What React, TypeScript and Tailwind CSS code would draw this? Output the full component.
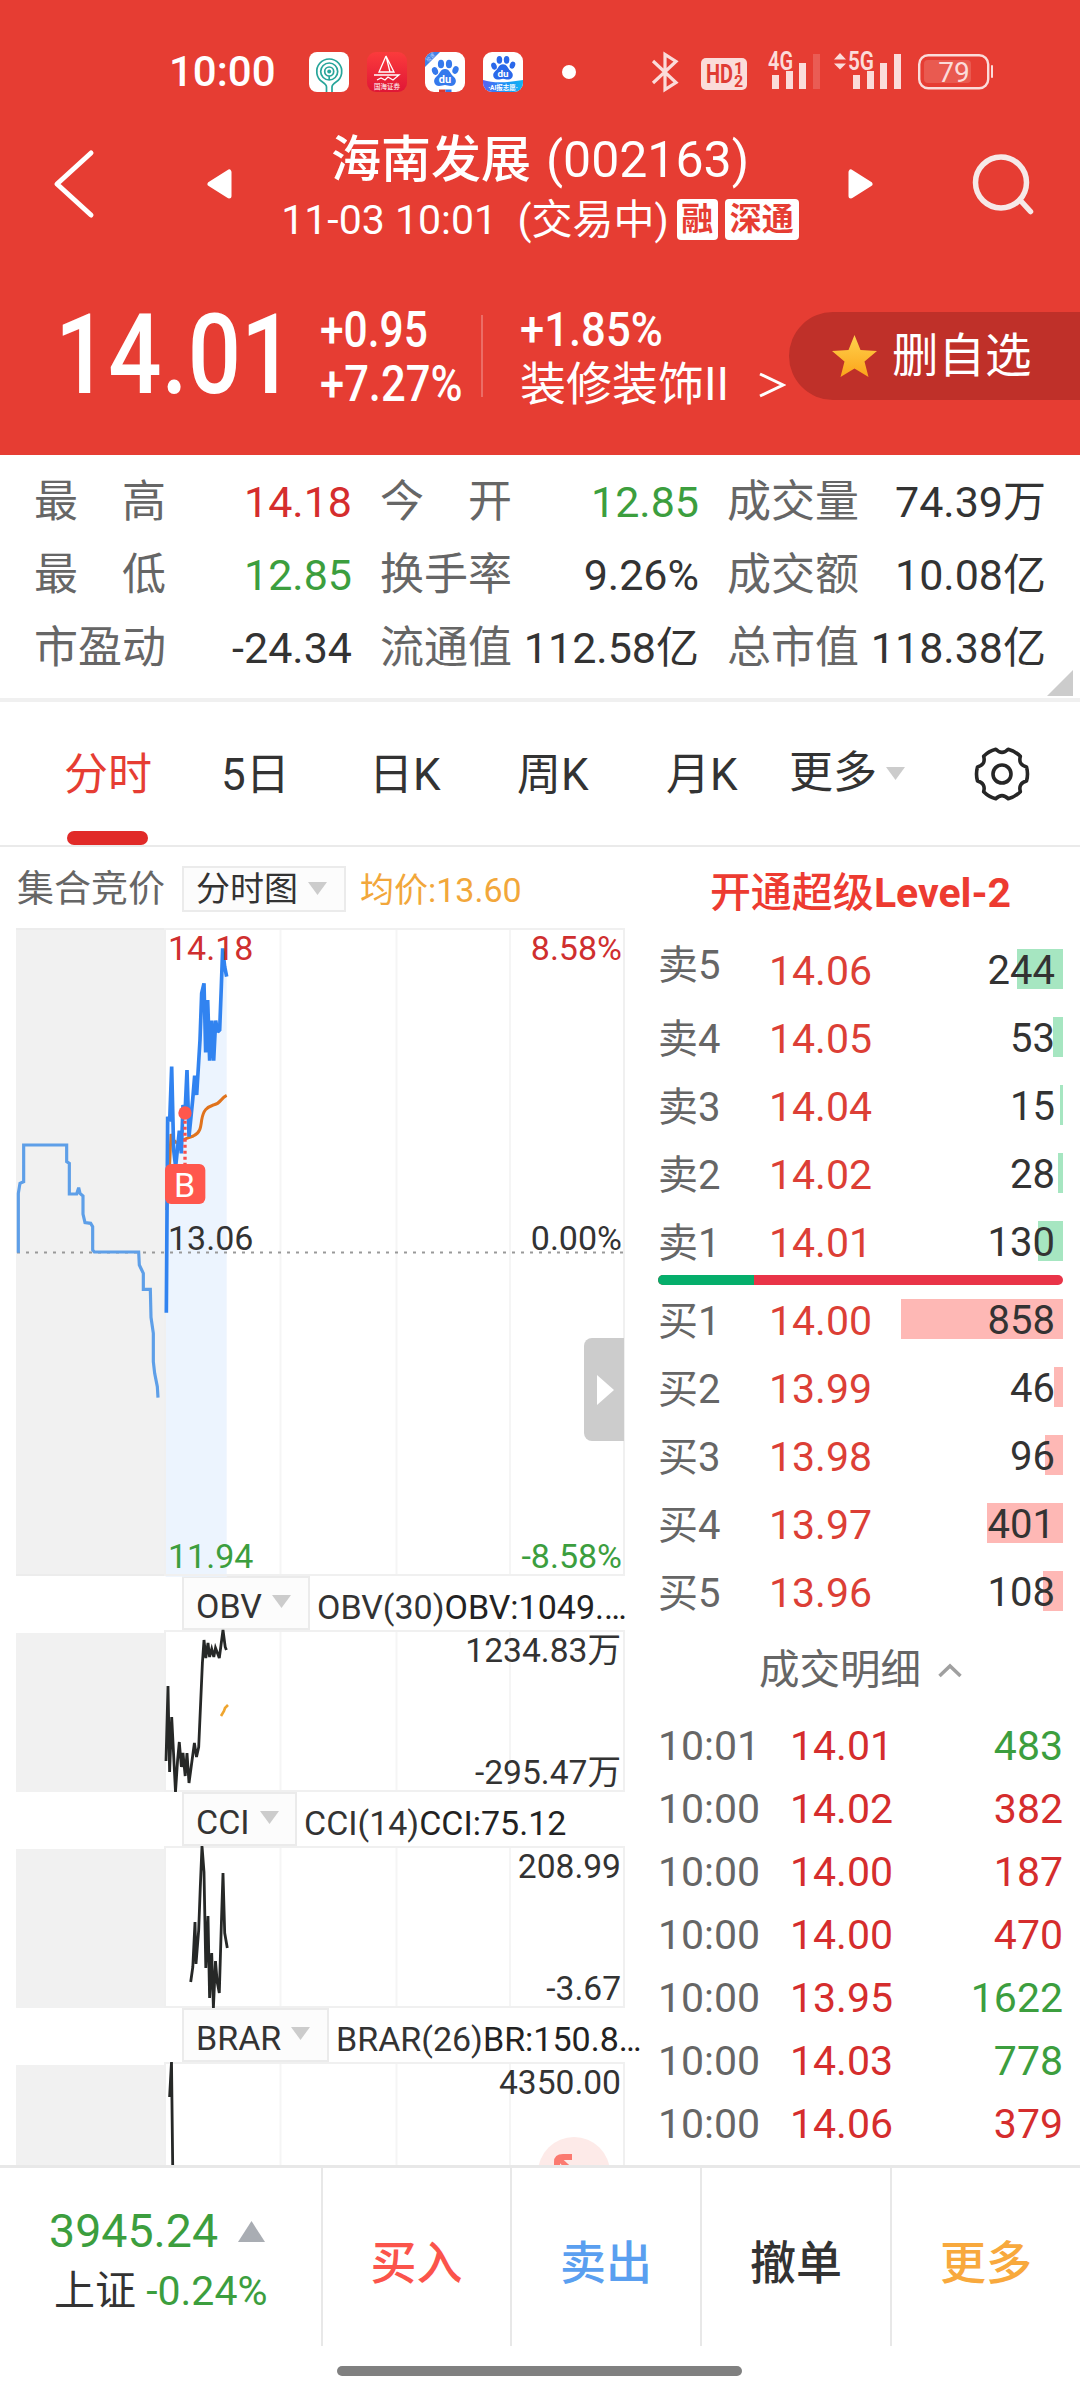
import type { ReactNode } from 'react';

type Tone = 'up' | 'down' | 'plain';

const TONE_CLASS: Record<Tone, string> = {
  up: 'text-[#d52d2d]',
  down: 'text-[#3c9e3e]',
  plain: 'text-[#333333]',
};

const STATS: { label: string; value: string; tone: Tone }[] = [
  { label: '最　高', value: '14.18', tone: 'up' },
  { label: '今　开', value: '12.85', tone: 'down' },
  { label: '成交量', value: '74.39万', tone: 'plain' },
  { label: '最　低', value: '12.85', tone: 'down' },
  { label: '换手率', value: '9.26%', tone: 'plain' },
  { label: '成交额', value: '10.08亿', tone: 'plain' },
  { label: '市盈动', value: '-24.34', tone: 'plain' },
  { label: '流通值', value: '112.58亿', tone: 'plain' },
  { label: '总市值', value: '118.38亿', tone: 'plain' },
];

const ASKS = [
  { label: '卖5', price: '14.06', qty: 244 },
  { label: '卖4', price: '14.05', qty: 53 },
  { label: '卖3', price: '14.04', qty: 15 },
  { label: '卖2', price: '14.02', qty: 28 },
  { label: '卖1', price: '14.01', qty: 130 },
];

const BIDS = [
  { label: '买1', price: '14.00', qty: 858 },
  { label: '买2', price: '13.99', qty: 46 },
  { label: '买3', price: '13.98', qty: 96 },
  { label: '买4', price: '13.97', qty: 401 },
  { label: '买5', price: '13.96', qty: 108 },
];

const TRADES: { time: string; price: string; qty: number; tone: Tone }[] = [
  { time: '10:01', price: '14.01', qty: 483, tone: 'down' },
  { time: '10:00', price: '14.02', qty: 382, tone: 'up' },
  { time: '10:00', price: '14.00', qty: 187, tone: 'up' },
  { time: '10:00', price: '14.00', qty: 470, tone: 'up' },
  { time: '10:00', price: '13.95', qty: 1622, tone: 'down' },
  { time: '10:00', price: '14.03', qty: 778, tone: 'down' },
  { time: '10:00', price: '14.06', qty: 379, tone: 'up' },
];

const MAX_QTY = 858;
const MAX_BAR = 162;

function Caret({ className = '' }: { className?: string }) {
  return (
    <svg className={`shrink-0 ${className}`} width="19" height="13" viewBox="0 0 19 13">
      <path d="M0 0H19L9.5 13Z" fill="#cccccc" />
    </svg>
  );
}

function Paw({ color }: { color: string }) {
  return (
    <g fill={color}>
      <ellipse cx="10" cy="19" rx="3" ry="4" transform="rotate(-20 10 19)" />
      <ellipse cx="16" cy="12" rx="3.1" ry="4.3" />
      <ellipse cx="24" cy="12" rx="3.1" ry="4.3" />
      <ellipse cx="30.5" cy="18" rx="3" ry="4" transform="rotate(20 30.5 18)" />
      <path d="M20 17c5 0 5 5 9 8 4 4 1 9-3 9-3 0-4-1-6-1s-3 1-6 1c-4 0-7-5-3-9 4-3 4-8 9-8Z" />
      <text x="20" y="31" fontSize="11" fontWeight="700" fill="#fff" textAnchor="middle">du</text>
    </g>
  );
}

function AppIcons() {
  return (
    <div className="flex gap-[18px]">
      <svg width="40" height="40" viewBox="0 0 40 40">
        <rect width="40" height="40" rx="8" fill="#fff" />
        <g fill="none" stroke="#27a59a" strokeWidth="1.7">
          <path d="M17.5 40v-5c0-2-1-3-4-5a12.5 12.5 0 1 1 13.5 0c-3 2-4 3-4 5v5" />
          <circle cx="20.2" cy="19.5" r="8.5" />
          <circle cx="20.2" cy="19.5" r="4.5" />
          <path d="M20.2 28v-4" />
        </g>
        <circle cx="20.2" cy="19.5" r="2" fill="#27a59a" />
      </svg>
      <svg width="40" height="40" viewBox="0 0 40 40">
        <defs>
          <linearGradient id="sail" x1="0" y1="0" x2="0" y2="1">
            <stop offset="0" stopColor="#fb3b3c" />
            <stop offset="1" stopColor="#e01636" />
          </linearGradient>
        </defs>
        <rect width="40" height="40" rx="9" fill="url(#sail)" />
        <path d="M19 4L12 20H27L19 4L23 20M7 23H32L26 28L21 25L18 28L14 26L10 28" fill="none" stroke="#fff" strokeWidth="1.3" />
        <text x="20" y="36.5" fontSize="6.5" fill="#fff" textAnchor="middle">国海证券</text>
      </svg>
      <svg width="40" height="40" viewBox="0 0 40 40">
        <clipPath id="tile"><rect width="40" height="40" rx="9" /></clipPath>
        <g clipPath="url(#tile)">
          <rect width="40" height="40" fill="#fff" />
          <Paw color="#3579ec" />
          <path d="M0 0H15L0 15Z" fill="#4380e4" />
          <text x="6" y="7" fontSize="5" fill="#b9d3ff" textAnchor="middle" transform="rotate(-45 6 6)">极速</text>
          <path d="M14 37.5h6.5v2.5h-6.5z" fill="#d9382f" />
          <path d="M20.5 37.5h6v2.5h-6z" fill="#3579ec" />
        </g>
      </svg>
      <svg width="40" height="40" viewBox="0 0 40 40">
        <defs>
          <linearGradient id="band" x1="0" y1="0" x2="1" y2="0">
            <stop offset="0" stopColor="#5b62f4" />
            <stop offset="0.5" stopColor="#1e8ff5" />
            <stop offset="1" stopColor="#12b4f3" />
          </linearGradient>
        </defs>
        <g clipPath="url(#tile)">
          <rect width="40" height="40" fill="#fff" />
          <g transform="translate(2 -3) scale(0.9)"><Paw color="#2a68ea" /></g>
          <path d="M0 28C12 32 28 30 40 28V40H0Z" fill="url(#band)" />
          <text x="20" y="38" fontSize="6.5" fontWeight="700" fill="#fff" textAnchor="middle">·AI报志愿·</text>
        </g>
      </svg>
    </div>
  );
}

function StatusIcons() {
  return (
    <svg className="overflow-visible" width="342" height="44" viewBox="0 0 342 44" fill="#fbdcda">
      <path d="M3 11L26 32.5L15 39.5V4.5L26 11.5L3 33" transform="translate(-1 0)" fill="none" stroke="#fbdcda" strokeWidth="3.2" />
      <rect x="50" y="8" width="46" height="32" rx="5" />
      <g fill="#e03c33" fontWeight="700">
        <text x="55" y="33" fontSize="26" textLength="27" lengthAdjust="spacingAndGlyphs">HD</text>
        <text x="83" y="23.5" fontSize="16">1</text>
        <text x="83" y="36.5" fontSize="16">2</text>
      </g>
      <text x="117" y="20" fontSize="25" fontWeight="600" textLength="25" lengthAdjust="spacingAndGlyphs">4G</text>
      <rect x="121" y="25" width="7" height="14" />
      <rect x="135" y="21" width="7" height="18" />
      <rect x="148" y="13" width="7" height="26" />
      <rect x="162" y="4" width="7" height="35" opacity="0.2" />
      <path d="M183 9.5L189 3L195 9.5ZM183 13.5H195L189 19.5Z" />
      <text x="197" y="20" fontSize="25" fontWeight="600" textLength="26" lengthAdjust="spacingAndGlyphs">5G</text>
      <rect x="202" y="25" width="7" height="14" />
      <rect x="216" y="21" width="7" height="18" />
      <rect x="229" y="13" width="7" height="26" />
      <rect x="243" y="4" width="7" height="35" />
      <rect x="268.2" y="5.2" width="69" height="33" rx="9" fill="none" stroke="#fbdcda" strokeWidth="2.4" />
      <rect x="273" y="10" width="47" height="23" rx="4" opacity="0.18" />
      <rect x="340" y="15" width="2" height="13" rx="1" />
      <text x="303" y="32" fontSize="28" textAnchor="middle">79</text>
    </svg>
  );
}

function Header() {
  return (
    <header className="h-[455px] bg-[#e63d33] text-white">
      <div className="flex h-[121px] items-center pt-[23px] pl-[169px]">
        <span className="w-[140px] text-[42px] font-medium leading-none">10:00</span>
        <AppIcons />
        <span className="ml-[39px] h-[14px] w-[14px] rounded-full bg-white" />
        <div className="ml-[75px]">
          <StatusIcons />
        </div>
      </div>

      <div className="flex h-[126px] items-center pl-[52px]">
        <svg width="44" height="70" viewBox="0 0 44 70">
          <path d="M39 4L5 35L39 66" fill="none" stroke="#fff" strokeWidth="5" strokeLinecap="round" strokeLinejoin="round" />
        </svg>
        <svg className="ml-[111px]" width="25" height="30" viewBox="0 0 25 30">
          <path d="M22 3V27L3 15Z" fill="#fff" stroke="#fff" strokeWidth="5" strokeLinejoin="round" />
        </svg>
        <div className="flex w-[616px] flex-col items-center gap-[12px] pt-[9px]">
          <h1 className="flex h-[50px] text-[50px] leading-[50px] whitespace-nowrap">
            <span className="text-[50px] font-medium">海南发展</span>
            <span className="ml-[15px]">(002163)</span>
          </h1>
          <div className="flex h-[46px] items-center text-[41px] leading-[46px] whitespace-pre">
            <span>11-03 10:01  (交易中)</span>
            <span className="ml-[8px] h-[41px] w-[41px] rounded-[4px] bg-white text-center text-[32px] leading-[40px] font-bold text-[#e63d33]">融</span>
            <span className="ml-[7px] h-[41px] w-[74px] rounded-[4px] bg-white text-center text-[32px] leading-[40px] font-bold text-[#e63d33]">深通</span>
          </div>
        </div>
        <svg width="25" height="30" viewBox="0 0 25 30">
          <path d="M3 3V27L22 15Z" fill="#fff" stroke="#fff" strokeWidth="5" strokeLinejoin="round" />
        </svg>
        <svg className="ml-[97px]" width="66" height="64" viewBox="0 0 66 64" fill="none" stroke="#f6e9e8" strokeWidth="5.5" strokeLinecap="round">
          <circle cx="31" cy="30.5" r="25.5" />
          <path d="M50 48L60.5 59.5" />
        </svg>
      </div>

      <div className="flex items-center pt-[56px] pl-[55px]">
        <div className="mb-[3px] w-[265px] text-[111px] leading-[90px] font-medium">
          <span className="inline-block origin-left scale-x-[0.845]">14.01</span>
        </div>
        <div className="flex w-[161px] flex-col gap-[4px] pt-[2px] text-[50px] leading-[50px] font-medium">
          <span className="origin-left scale-x-[0.85]">+0.95</span>
          <span className="origin-left scale-x-[0.87]">+7.27%</span>
        </div>
        <div className="h-[82px] w-[2px] bg-white/25" />
        <div className="ml-[37px] flex w-[269px] flex-col gap-[4px] pt-[2px] whitespace-nowrap">
          <span className="origin-left scale-x-[0.89] text-[49px] leading-[50px] font-medium">+1.85%</span>
          <div className="flex text-[46px] leading-[50px]">
            <span className="w-[238px]">装修装饰II</span>
            <svg className="mt-[12px]" width="28" height="28" viewBox="0 0 28 28">
              <path d="M2 3L25 14L2 25" fill="none" stroke="#fff" strokeWidth="3" />
            </svg>
          </div>
        </div>
        <div className="flex h-[88px] w-[291px] items-center rounded-l-full bg-[#bf3029] pl-[43px]">
          <svg width="45" height="43" viewBox="0 0 45 43">
            <defs>
              <linearGradient id="star" x1="0" y1="0" x2="0" y2="1">
                <stop offset="0" stopColor="#ffd24d" />
                <stop offset="1" stopColor="#fba41a" />
              </linearGradient>
            </defs>
            <path d="M22.5 0L28.5 15L45 16L32.5 26.5L36.5 42L22.5 33.5L8.5 42L12.5 26.5L0 16L16.5 15Z" fill="url(#star)" />
          </svg>
          <span className="ml-[15px] text-[46.5px] leading-none">删自选</span>
        </div>
      </div>
    </header>
  );
}

function Stats() {
  return (
    <section className="relative h-[247px] border-b-[4px] border-[#f0f0f0] pt-[11px] pl-[34px]">
      <div className="grid grid-cols-[318px_319px_319px] gap-x-[28px]">
        {STATS.map((s) => (
          <div key={s.label} className="flex h-[73px] items-center justify-between text-[43px] leading-[73px] whitespace-nowrap">
            <span className="text-[44px] text-[#666666]">{s.label}</span>
            <span className={TONE_CLASS[s.tone]}>{s.value}</span>
          </div>
        ))}
      </div>
      <svg className="absolute right-[7px] bottom-[2px]" width="26" height="26" viewBox="0 0 26 26">
        <path d="M26 0V26H0Z" fill="#cccccc" />
      </svg>
    </section>
  );
}

// Six-lobed cog: flat lobes every 60 degrees with a shallow dip between them.
function Gear() {
  const pt = (deg: number, r: number) => {
    const a = (deg * Math.PI) / 180;
    return `${(28 + r * Math.cos(a)).toFixed(2)} ${(28 + r * Math.sin(a)).toFixed(2)}`;
  };
  let d = `M${pt(-16, 25.5)}`;
  for (let k = 0; k < 6; k++) {
    const c = k * 60;
    d += `A26 26 0 0 1 ${pt(c + 16, 25.5)}Q${pt(c + 30, 18.5)} ${pt(c + 44, 25.5)}`;
  }
  return (
    <svg width="56" height="56" viewBox="0 0 56 56" fill="none" stroke="#262626" strokeWidth="3.6" strokeLinejoin="round">
      <path d={`${d}Z`} />
      <circle cx="28" cy="28" r="9" />
    </svg>
  );
}

function Tabs() {
  return (
    <nav className="flex h-[145px] border-b-[2px] border-[#eaeaea] pl-[64px] text-[44px] leading-[147px] whitespace-nowrap text-[#333333]">
      <div className="relative w-[157px] text-[#e63d33]">
        分时
        <span className="absolute bottom-0 left-[3px] h-[14px] w-[81px] rounded-[7px] bg-[#e12a28]" />
      </div>
      <div className="w-[148px]">5日</div>
      <div className="w-[148px]">日K</div>
      <div className="w-[149px]">周K</div>
      <div className="w-[123px]">月K</div>
      <div className="flex w-[185px] items-center">
        更多
        <Caret className="ml-[9px]" />
      </div>
      <div className="flex items-center">
        <Gear />
      </div>
    </nav>
  );
}

function IndicatorHeader({ name, width, children }: { name: string; width: string; children: ReactNode }) {
  return (
    <div className="flex h-[54px] items-start pl-[165px] text-[34px] whitespace-nowrap text-[#333333]">
      <div className={`flex h-[54px] shrink-0 items-center border-2 border-[#ebebeb] bg-[#fcfcfc] pt-[6px] pl-[12px] leading-[48px] ${width}`}>
        <span>{name}</span>
        <Caret className="mb-[10px] ml-[10px]" />
      </div>
      <div className="pl-[7px] leading-[62px]">{children}</div>
    </div>
  );
}

function Grid({ height }: { height: number }) {
  return (
    <g stroke="#f0f0f0" strokeWidth="2">
      <path d={`M263.5 1V${height}M379.5 1V${height}M493 1V${height}`} stroke="#f5f5f5" />
      <path d={`M148 1H607V${height - 1}H148Z`} fill="none" />
    </g>
  );
}

function SubChart({ height, line, top, bottom, extra }: { height: number; line: string; top: string; bottom?: string; extra?: ReactNode }) {
  return (
    <svg className="block overflow-visible" width="608" height={height} viewBox={`0 0 608 ${height}`}>
      <rect x="-1" y="3" width="149" height={height - 3} fill="#f1f1f1" />
      <Grid height={height} />
      <polyline points={line} fill="none" stroke="#262827" strokeWidth="2.8" />
      {extra}
      <g fill="#333333" fontSize="33.6" textAnchor="end">
        <text x="604" y="32">{top}</text>
        {bottom && <text x="604" y="154">{bottom}</text>}
      </g>
    </svg>
  );
}

function PriceChart() {
  return (
    <div className="relative h-[648px]">
      <svg className="block overflow-visible" width="608" height="648" viewBox="0 0 608 648">
        <rect x="-1" width="149" height="648" fill="#f1f1f1" />
        <path d="M-1 1H148M-1 647H148" stroke="#ececec" strokeWidth="2" />
        {/* 3x plotting space for the price lines */}
        <g transform="scale(0.33333) translate(-51 -54)" fill="none">
          <path
            d="M497 1208L503 620L509 634L515 470L521 720L527 770L538 662L544 730L549 585L555 610L561 480L567 680L578 570L584 497L590 555L600 390L605 250L612 220L617 427L623 270L629 452L635 332L641 452L647 332L653 366L659 360L664 230L668 115L674 170L680 200V2000H497Z"
            fill="#ecf4fe"
          />
        </g>
        <Grid height={648} />
        <path d="M0 324.5H608" stroke="#999999" strokeWidth="2" strokeDasharray="3 6" />
        <g transform="scale(0.33333) translate(-51 -54)" fill="none" strokeLinejoin="miter" strokeMiterlimit="2">
          <path d="M55 1028V850L60 820L71 815V705H200V755L208 760V852H230L236 833L240 850L249 858V912L255 938L272 940L278 950V1020L283 1026H416L418 1065L430 1090V1138H451L453 1222L460 1270V1355L464 1390L472 1430L474 1463" stroke="#5e9fe8" strokeWidth="9.5" />
          <path d="M500 900L508 780L513 672L520 690L530 698L545 692L560 685L580 678C600 668 602 655 605 630C610 600 620 592 640 585C665 580 660 565 680 556" stroke="#e0731d" strokeWidth="9" />
          <path d="M499 1208L503 620L509 634L515 470L521 720L527 770L538 662L544 730L549 585L555 610L561 480L567 680L578 570L584 497L590 555L600 390L605 250L612 220L617 427L623 270L629 452L635 332L641 452L647 332L653 366L659 360L664 230L668 115L674 170L680 200" stroke="#3183f0" strokeWidth="11" />
          <path d="M555 632V764" stroke="#f8504d" strokeWidth="10" strokeDasharray="9 9" />
          <circle cx="555" cy="609" r="20" fill="#ff574d" />
          <rect x="495" y="762" width="121" height="120" rx="18" fill="#ff574d" />
        </g>
        <text x="167.5" y="269" fontSize="34" fill="#fff" textAnchor="middle">B</text>
        <g fontSize="34">
          <text x="151" y="32" fill="#cf2f2f">14.18</text>
          <text x="151" y="322" fill="#333333">13.06</text>
          <text x="151" y="640" fill="#3c9e3e">11.94</text>
          <g textAnchor="end">
            <text x="605" y="32" fill="#cf2f2f">8.58%</text>
            <text x="605" y="322" fill="#333333">0.00%</text>
            <text x="605" y="640" fill="#3c9e3e">-8.58%</text>
          </g>
        </g>
      </svg>
      <button className="absolute top-[410px] left-[567px] flex h-[103px] w-[40px] items-center rounded-l-[8px] bg-[#cccccc] pl-[13px]">
        <svg width="17" height="30" viewBox="0 0 17 30">
          <path d="M0 0L17 15L0 30Z" fill="#fff" />
        </svg>
      </button>
    </div>
  );
}

const OBV_LINE =
  '149,131 151,56 152.6,142 154.7,87 158.5,162 160.6,130 162.3,112 164.4,137 166,123 168.2,146 170,123 172,153 177.4,113 179.5,127 181.7,117 185.4,33 187,10 188.8,28 191,13 192.6,27 194.7,19 196.8,27 198.5,18 202.3,28 206,0 208.2,17 209.4,20';
const CCI_LINE =
  '173.7,136 175.8,121 178,76 179,118 181.7,84 183.3,41 185,0 187,26 188.8,122 191,70 192.6,152 194.7,107 196.4,162 198.5,115 200.2,136 202.3,147 204.4,77 206,27 207.7,87 210.3,102';

function Charts() {
  return (
    <div className="h-[1318px] w-[641px] overflow-hidden pl-[17px]">
      <div className="flex h-[81px] items-center pt-[3px] whitespace-nowrap">
        <span className="w-[165px] pt-[2px] text-[37px] text-[#666666]">集合竞价</span>
        <div className="flex h-[46px] w-[164px] shrink-0 items-center border-2 border-[#ebebeb] bg-[#fcfcfc] pl-[12px] text-[34px] leading-[44px] text-[#333333]">
          分时图
          <Caret className="mb-[2px] ml-[10px]" />
        </div>
        <span className="ml-[14px] pt-[2px] text-[34px] text-[#f2a73b]">均价:13.60</span>
      </div>
      <PriceChart />
      <IndicatorHeader name="OBV" width="w-[128px]">
        OBV(30)<span className="text-[#222222]">OBV:1049.…</span>
      </IndicatorHeader>
      <SubChart
        height={162}
        line={OBV_LINE}
        top="1234.83万"
        bottom="-295.47万"
        extra={<path d="M204 86L207 81L208 78L211 75" fill="none" stroke="#efa52f" strokeWidth="2.6" />}
      />
      <IndicatorHeader name="CCI" width="w-[115px]">
        CCI(14)<span className="text-[#222222]">CCI:75.12</span>
      </IndicatorHeader>
      <SubChart height={162} line={CCI_LINE} top="208.99" bottom="-3.67" />
      <IndicatorHeader name="BRAR" width="w-[147px]">
        BRAR(26)<span className="text-[#222222]">BR:150.8…</span>
      </IndicatorHeader>
      <SubChart
        height={162}
        line="152.6,35 154.5,0 156,130"
        top="4350.00"
        extra={
          <g>
            <circle cx="557" cy="111" r="36" fill="#fdeae8" />
            <path d="M540 112V100Q540 95 546 95H555" fill="none" stroke="#fb7a70" strokeWidth="6" />
            <path d="M542 97L556 110" stroke="#fb7a70" strokeWidth="5" />
          </g>
        }
      />
    </div>
  );
}

function BookRow({ label, price, qty, barClass, raised }: { label: string; price: string; qty: number; barClass: string; raised?: boolean }) {
  return (
    <div className="relative flex h-[68px] items-center text-[40px] leading-[68px]">
      <span className={`absolute right-0 h-[40px] ${barClass}`} style={{ width: Math.max(2, (qty / MAX_QTY) * MAX_BAR) }} />
      <span className={`w-[111px] text-[#666666] ${raised ? 'mb-[7px]' : 'mt-[5px]'}`}>{label}</span>
      <span className="relative mt-[4px] text-[41px] text-[#dc3f36]">{price}</span>
      <span className="relative mt-[4px] ml-auto pr-[8px] text-[#333333]">{qty}</span>
    </div>
  );
}

function OrderBook() {
  return (
    <div className="ml-[17px] h-[1318px] w-[405px] overflow-hidden">
      <div className="h-[88px] pt-[2px] text-center text-[41px] leading-[89px] font-medium text-[#ed3b31]">
        开通超级<span className="font-bold">Level-2</span>
      </div>
      {ASKS.map((r, i) => (
        <BookRow key={r.label} {...r} barClass="bg-[#a6e6c1]" raised={i === 0} />
      ))}
      <div className="flex h-[10px] overflow-hidden rounded-full bg-[#e93448]">
        <div className="w-[96px] bg-[#05ae6b]" />
      </div>
      {BIDS.map((r) => (
        <BookRow key={r.label} {...r} barClass="bg-[#feb8b5]" />
      ))}
      <div className="flex h-[90px] items-center justify-center text-[40.5px] leading-[92px] text-[#666666]">
        成交明细
        <svg className="ml-[17px]" width="24" height="15" viewBox="0 0 24 15">
          <path d="M1.5 13L12 3L22.5 13" fill="none" stroke="#a0a0a0" strokeWidth="3.5" />
        </svg>
      </div>
      {TRADES.map((t, i) => (
        <div key={i} className="flex h-[63px] items-center text-[41px] leading-[63px]">
          <span className="w-[132px] text-[#666666]">{t.time}</span>
          <span className="text-[#d52d2d]">{t.price}</span>
          <span className={`ml-auto ${TONE_CLASS[t.tone]}`}>{t.qty}</span>
        </div>
      ))}
    </div>
  );
}

function BottomBar() {
  return (
    <footer className="h-[235px] border-t-[3px] border-[#e8e8e8]">
      <div className="flex h-[178px] text-center text-[46px] leading-[190px] font-medium">
        <div className="flex w-[323px] flex-col border-r-2 border-[#e8e8e8] pt-[36px] pl-[49px] text-left leading-[54px] font-normal">
          <div className="flex items-center text-[46.5px] leading-[54px] text-[#3c9e3e]">
            3945.24
            <svg className="ml-[20px]" width="27" height="21" viewBox="0 0 27 21">
              <path d="M13.5 0L27 21H0Z" fill="#a9adb3" />
            </svg>
          </div>
          <div className="mt-[6px] pl-[5px] text-[41px] text-[#333333]">
            上证 <span className="text-[#3c9e3e]">-0.24%</span>
          </div>
        </div>
        <div className="w-[189px] border-r-2 border-[#e8e8e8] text-[#fb544b]">买入</div>
        <div className="w-[190px] border-r-2 border-[#e8e8e8] text-[#5a9ff0]">卖出</div>
        <div className="w-[190px] border-r-2 border-[#e8e8e8] text-[#333333]">撤单</div>
        <div className="w-[188px] text-[#f8a93d]">更多</div>
      </div>
      <div className="mt-[20px] ml-[337px] h-[10px] w-[405px] rounded-full bg-[#808080]" />
    </footer>
  );
}

export default function App() {
  return (
    <div className="h-[2400px] w-[1080px] overflow-hidden bg-white font-[Roboto,'Noto_Sans_CJK_SC',sans-serif]">
      <Header />
      <Stats />
      <Tabs />
      <main className="flex h-[1318px]">
        <Charts />
        <OrderBook />
      </main>
      <BottomBar />
    </div>
  );
}
